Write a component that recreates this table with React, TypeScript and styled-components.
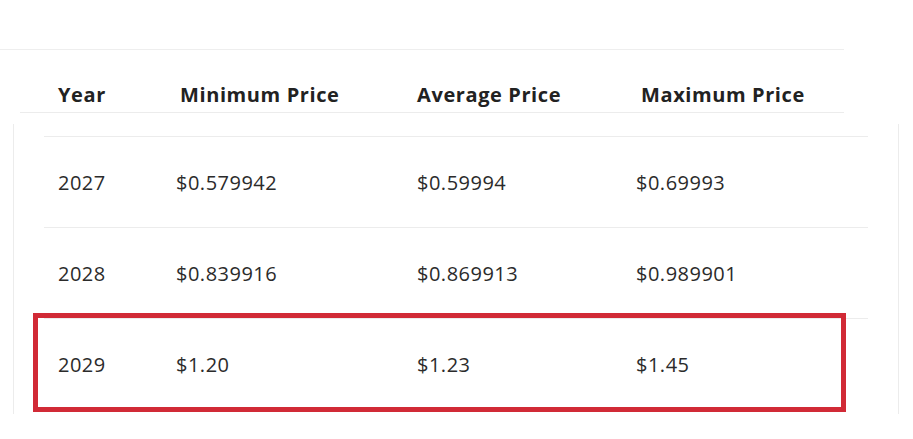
import React from "react";
import styled, { createGlobalStyle } from "styled-components";

const Global = createGlobalStyle`
  html, body { margin: 0; padding: 0; background: #ffffff; }
  body { font-family: "Open Sans", "Noto Sans", sans-serif; }
`;

const Page = styled.div`
  width: 913px;
  height: 439px;
  overflow: hidden;
  padding-top: 49px;
  box-sizing: border-box;
`;

const TopRule = styled.div`
  width: 844px;
  border-top: 1px solid #eeeeee;
`;

const HeadRow = styled.div`
  margin-left: 20px;
  width: 824px;
  height: 63px;
  box-sizing: border-box;
  padding-left: 38px;
  padding-top: 28px;
  display: grid;
  grid-template-columns: 122px 237px 224px 1fr;
  align-items: center;
  border-bottom: 1px solid #ececec;
`;

const HeadCell = styled.div`
  font-family: "Open Sans", sans-serif;
  font-weight: 700;
  font-size: 20px;
  letter-spacing: 0.6px;
  line-height: 24px;
  color: #222222;
  white-space: nowrap;
`;

const BodyBox = styled.div`
  position: relative;
  margin-top: 11px;
  margin-left: 13px;
  width: 886px;
  height: 290px;
  box-sizing: border-box;
  border-left: 1px solid #ececec;
  border-right: 1px solid #ececec;
  padding-top: 12px;
  padding-left: 30px;
`;

const Row = styled.div`
  width: 824px;
  height: 91px;
  box-sizing: border-box;
  padding-left: 14px;
  display: grid;
  grid-template-columns: 118px 241px 219px 1fr;
  align-items: center;
  border-top: 1px solid #ececec;
  &:last-child { border-bottom: 1px solid #ececec; height: 92px; }
`;

const Cell = styled.div`
  font-family: "Open Sans", sans-serif;
  font-weight: 400;
  font-size: 20px;
  letter-spacing: 0.5px;
  color: #2b2b2b;
  white-space: nowrap;
`;

const Highlight = styled.div`
  position: absolute;
  left: 19px;
  top: 189px;
  width: 813px;
  height: 99px;
  box-sizing: border-box;
  border: 5px solid #d12a36;
  pointer-events: none;
`;

const data = [
  ["2027", "$0.579942", "$0.59994", "$0.69993"],
  ["2028", "$0.839916", "$0.869913", "$0.989901"],
  ["2029", "$1.20", "$1.23", "$1.45"],
];

export default function App() {
  return (
    <Page>
      <Global />
      <TopRule />
      <HeadRow>
        <HeadCell>Year</HeadCell>
        <HeadCell>Minimum Price</HeadCell>
        <HeadCell>Average Price</HeadCell>
        <HeadCell>Maximum Price</HeadCell>
      </HeadRow>
      <BodyBox>
        {data.map((r) => (
          <Row key={r[0]}>
            {r.map((c, i) => (
              <Cell key={i}>{c}</Cell>
            ))}
          </Row>
        ))}
        <Highlight />
      </BodyBox>
    </Page>
  );
}
